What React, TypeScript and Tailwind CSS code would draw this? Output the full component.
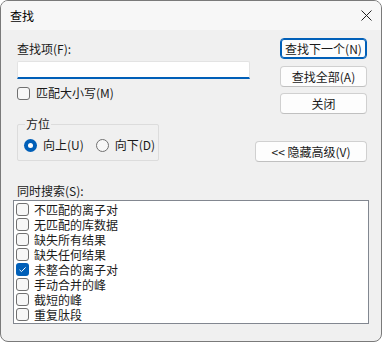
import React from "react";

const font = { fontFamily: '"Noto Sans CJK SC", "Microsoft YaHei", sans-serif' };

function CheckBox({ checked = false }: { checked?: boolean }) {
  return checked ? (
    <span className="block w-[13px] h-[13px] rounded-[3px] bg-[#005fb8] flex items-center justify-center shrink-0">
      <svg width="9" height="9" viewBox="0 0 9 9">
        <path d="M1.5 4.8 L3.5 6.6 L7.6 2.4" fill="none" stroke="white" strokeWidth="1" />
      </svg>
    </span>
  ) : (
    <span className="block w-[13px] h-[13px] rounded-[3px] border border-[#707070] bg-[#f7f7f7] shrink-0" />
  );
}

function Radio({ checked = false }: { checked?: boolean }) {
  return checked ? (
    <span className="w-[13px] h-[13px] rounded-full bg-[#005fb8] flex items-center justify-center shrink-0">
      <span className="block w-[5px] h-[5px] rounded-full bg-white" />
    </span>
  ) : (
    <span className="block w-[13px] h-[13px] rounded-full border border-[#707070] bg-[#f7f7f7] shrink-0" />
  );
}

function Btn({ children, def = false, className = "" }: { children: React.ReactNode; def?: boolean; className?: string }) {
  return (
    <div
      className={
        "h-[21px] rounded-[4px] bg-[#fdfdfd] flex items-center justify-center text-[12px] leading-[16px] text-[#1a1a1a] " +
        (def ? "border border-[#005fb8] shadow-[inset_0_0_0_1px_#005fb8] " : "border border-[#d0d0d0] border-b-[#c0c0c0] ") +
        className
      }
    >
      {children}
    </div>
  );
}

const items: [string, boolean][] = [
  ["不匹配的离子对", false],
  ["无匹配的库数据", false],
  ["缺失所有结果", false],
  ["缺失任何结果", false],
  ["未整合的离子对", true],
  ["手动合并的峰", false],
  ["截短的峰", false],
  ["重复肽段", false],
];

export default function App() {
  return (
    <div className="w-[382px] h-[342px] bg-white" style={font}>
      <div className="w-[382px] h-[342px] border border-[#7a7a7a] rounded-[8px] overflow-hidden bg-[#f0f0f0] flex flex-col text-[#1a1a1a]">
        {/* title bar */}
        <div className="h-[29px] bg-[#f7f7f7] flex items-center pl-[9px] pr-[9px] shrink-0">
          <span className="text-[12px] leading-[16px] text-black">查找</span>
          <svg className="ml-auto" width="11" height="11" viewBox="0 0 11 11">
            <path d="M0.5 0.5 L10.5 10.5 M10.5 0.5 L0.5 10.5" stroke="#222" strokeWidth="1" />
          </svg>
        </div>

        {/* body */}
        <div className="flex flex-col px-[12px]">
          <div className="flex">
            <div className="flex flex-col ml-[4px] pt-[11px] w-[233px]">
              <div className="text-[12px] leading-[16px]">查找项(F):</div>
              <div className="mt-[4px] h-[18px] bg-white border border-[#e3e3e3] border-b-2 border-b-[#005fb8] rounded-t-[2px]" />
              <div className="mt-[7px] h-[14px] flex items-center gap-[6px]">
                <CheckBox />
                <span className="text-[12px] leading-[16px]">匹配大小写(M)</span>
              </div>
              <div className="relative mt-[24px] w-[142px] h-[37px] border border-[#dcdcdc] rounded-[2px]">
                <span className="absolute -top-[9px] left-[7px] px-[1px] bg-[#f0f0f0] text-[12px] leading-[16px]">方位</span>
                <div className="pt-[13px] pl-[6px] h-[14px] flex items-center box-content">
                  <Radio checked />
                  <span className="ml-[6px] text-[12px] leading-[16px]">向上(U)</span>
                  <span className="ml-[12px]"><Radio /></span>
                  <span className="ml-[6px] text-[12px] leading-[16px]">向下(D)</span>
                </div>
              </div>
            </div>
            <div className="ml-auto mr-[2px] pt-[8px] flex flex-col items-end">
              <Btn def className="w-[87px]">查找下一个(N)</Btn>
              <Btn className="w-[87px] mt-[7px]">查找全部(A)</Btn>
              <Btn className="w-[87px] mt-[6px]">关闭</Btn>
              <Btn className="w-[112px] mt-[27px]">&lt;&lt; 隐藏高级(V)</Btn>
            </div>
          </div>

          <div className="ml-[4px] mt-[21px] text-[12px] leading-[16px]">同时搜索(S):</div>
          <div className="mt-[1px] w-[356px] h-[124px] bg-white border border-[#828790] pt-[1px] pl-[2px]">
            {items.map(([t, c]) => (
              <div key={t} className="h-[15px] flex items-center gap-[5px]">
                <CheckBox checked={c} />
                <span className="text-[12px] leading-[15px]">{t}</span>
              </div>
            ))}
          </div>
        </div>
      </div>
    </div>
  );
}
